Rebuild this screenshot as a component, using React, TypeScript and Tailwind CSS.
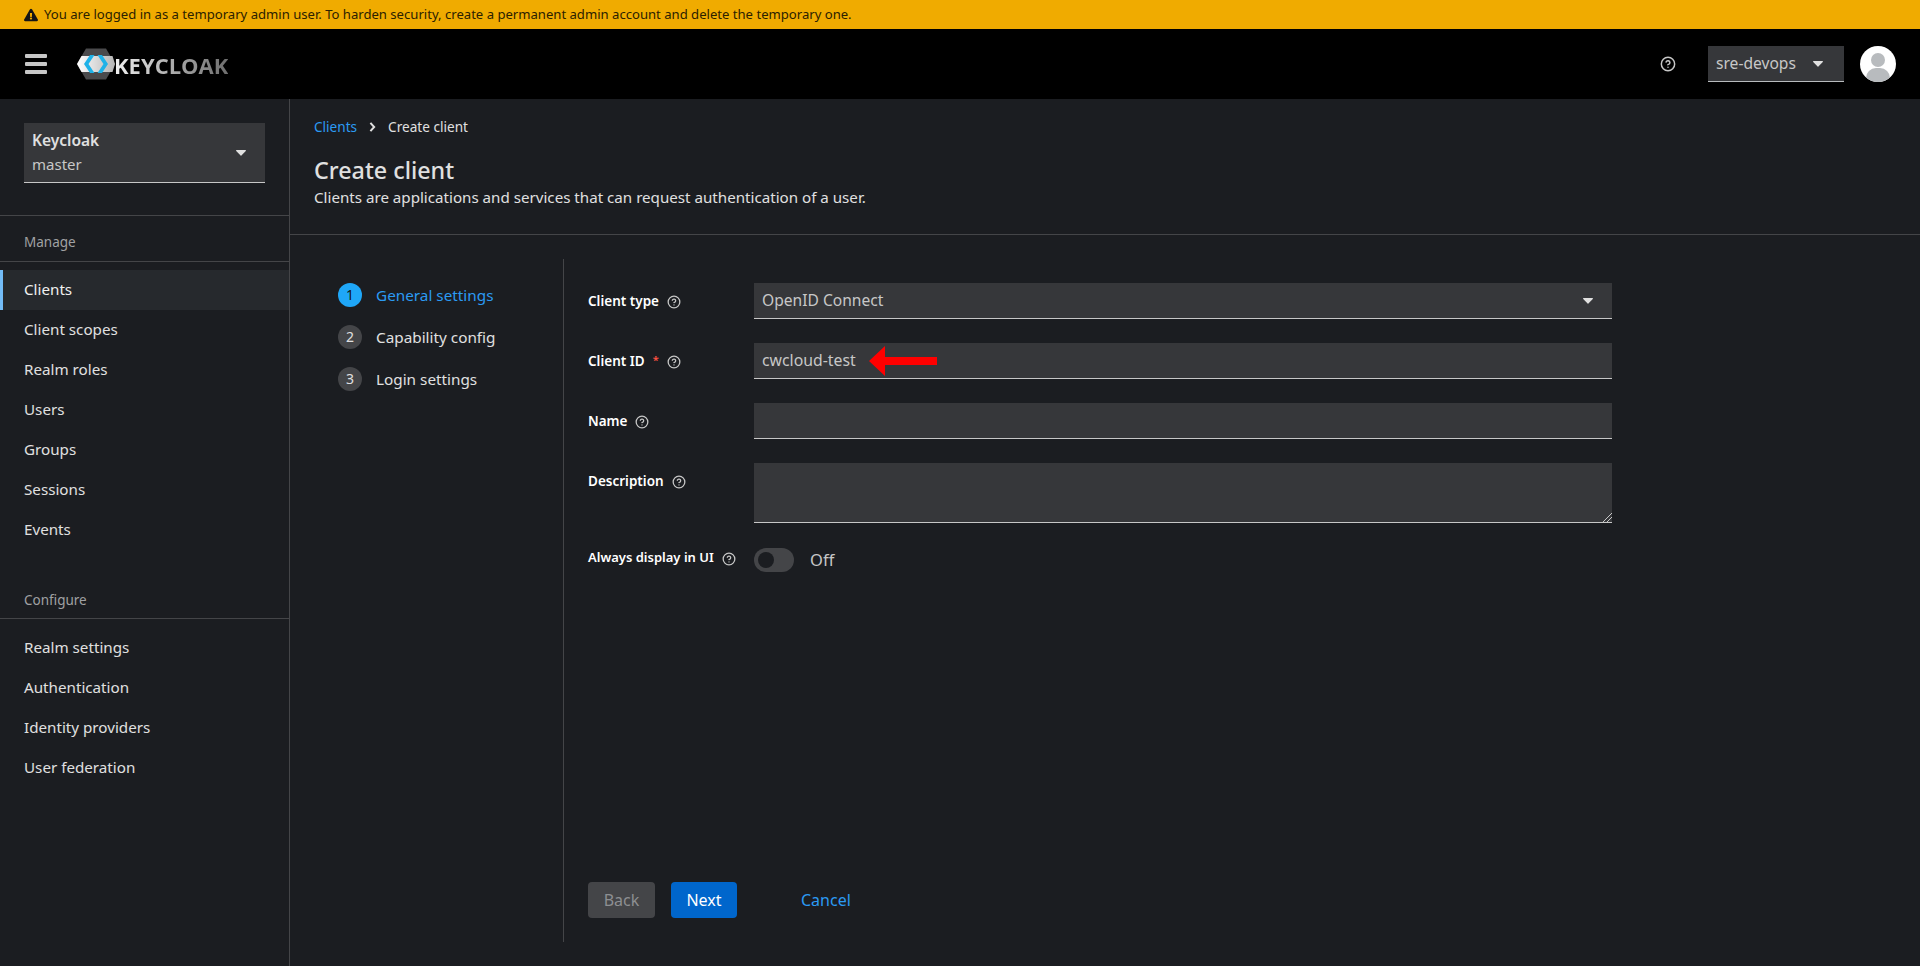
import React from "react";
import { FaExclamationTriangle } from "react-icons/fa";
import { CircleHelp } from "lucide-react";

const Caret = ({ className = "" }: { className?: string }) => (
  <svg viewBox="0 0 10 6" className={className} fill="currentColor">
    <path d="M0.6 0h8.8c.5 0 .8.6.4 1L5.4 5.6a.6.6 0 0 1-.8 0L.2 1C-.2.6.1 0 .6 0z" />
  </svg>
);

const Help = () => <CircleHelp className="w-[14px] h-[14px] text-[#c7c7c7] shrink-0 translate-y-px" strokeWidth={2.2} />;

const manage = ["Clients", "Client scopes", "Realm roles", "Users", "Groups", "Sessions", "Events"];
const configure = ["Realm settings", "Authentication", "Identity providers", "User federation"];

function NavItem({ label, active }: { label: string; active?: boolean }) {
  return (
    <div
      className={
        active
          ? "h-10 flex items-center pb-[2px] pl-[21px] border-l-[3px] border-[#73bcf7] bg-[#26292d] text-[#f0f0f0] text-[15.2px]"
          : "h-10 flex items-center pb-[2px] pl-6 text-[#e0e0e0] text-[15.2px]"
      }
    >
      {label}
    </div>
  );
}

function Logo() {
  return (
    <div className="flex items-center ml-[30px]">
      <svg viewBox="0 0 38 32" className="w-[38px] h-[32px]">
        <defs>
          <linearGradient id="band" x1="0" x2="1" y1="0" y2="0">
            <stop offset="0" stopColor="#ffffff" />
            <stop offset="1" stopColor="#b5b5b5" />
          </linearGradient>
        </defs>
        <path d="M9 0.5h20l9 15.5-9 15.5H9L0 16z" fill="#4a4a4c" />
        <path d="M4.5 8h31l2.5 8-2.5 8h-31L0 16z" fill="url(#band)" />
        <path d="M13 7l-6 9 6 9h4.5l-6-9 6-9z" fill="#1fb2e8" />
        <path d="M20.5 7l6 9-6 9H25l6-9-6-9z" fill="#1fb2e8" />
      </svg>
      <span className="-ml-px text-[22px] leading-none font-bold tracking-[0px] translate-y-px bg-gradient-to-r from-[#f2f2f2] to-[#6e6e6e] bg-clip-text text-transparent font-['Open_Sans',sans-serif]">
        KEYCLOAK
      </span>
    </div>
  );
}

function Field({
  label,
  required,
  children,
  height = "h-9",
}: {
  label: string;
  required?: boolean;
  children?: React.ReactNode;
  height?: string;
}) {
  return (
    <div className="flex">
      <div className="w-[166px] shrink-0 flex items-center gap-2 h-[36px] text-[13.5px] font-semibold text-white">
        <span>{label}</span>
        {required && <span className="text-[#fe5142] text-[11px] -translate-y-px">*</span>}
        <Help />
      </div>
      <div
        className={`${height} w-[858px] bg-[#36373a] border-b border-[#c7c7c7] flex items-center px-2 text-[#c7c7c7] text-[15.6px] relative`}
      >
        {children}
      </div>
    </div>
  );
}

export default function App() {
  return (
    <div className="h-screen w-full flex flex-col overflow-hidden bg-[#1b1d21] text-[#e0e0e0] text-base font-['Noto_Sans',sans-serif]">
      <div className="h-[29px] shrink-0 bg-[#f0ab00] flex items-center pl-6 gap-[6px] text-[13.1px] text-[#2b2100]">
        <FaExclamationTriangle className="w-[14px] h-[14px] text-[#151515]" />
        <span>You are logged in as a temporary admin user. To harden security, create a permanent admin account and delete the temporary one.</span>
      </div>

      <header className="h-[70px] shrink-0 bg-black flex items-center pl-[25px] pr-6">
        <svg viewBox="0 0 22 20" className="w-[22px] h-[20px] text-[#c7c7c7]" fill="currentColor">
          <rect width="22" height="4" rx="1" y="0" />
          <rect width="22" height="4" rx="1" y="8" />
          <rect width="22" height="4" rx="1" y="16" />
        </svg>
        <Logo />
        <div className="ml-auto flex items-center">
          <CircleHelp className="w-4 h-4 text-[#c7c7c7]" strokeWidth={2.2} />
          <div className="ml-8 w-[136px] h-9 bg-[#36373a] border-b border-[#b8bbbe] flex items-center pl-2 pr-[21px] justify-between text-[#c7c7c7] text-[15.6px]">
            <span>sre-devops</span>
            <Caret className="w-[10px] h-[6px] text-[#e0e0e0]" />
          </div>
          <div className="ml-4 w-9 h-9 rounded-full bg-white relative overflow-hidden">
            <div className="absolute left-[11px] top-[7px] w-[14px] h-[14px] rounded-full bg-[#b8bbbe]" />
            <div className="absolute left-[6px] top-[22px] w-[24px] h-[20px] rounded-t-[10px] bg-[#b8bbbe]" />
          </div>
        </div>
      </header>

      <div className="flex-1 flex min-h-0">
        <aside className="w-[290px] shrink-0 border-r border-[#444548] flex flex-col">
          <div className="px-6 pt-6 pb-8 border-b border-[#444548]">
            <div className="h-[60px] w-[241px] bg-[#36373a] border-b border-[#c7c7c7] flex items-center justify-between pl-2 pr-[19px]">
              <div className="-translate-y-px">
                <div className="font-semibold text-[#e0e0e0] leading-6 text-[15.5px]">Keycloak</div>
                <div className="text-[#c7c7c7] leading-6 text-[15px]">master</div>
              </div>
              <Caret className="w-[10px] h-[6px] text-[#e0e0e0]" />
            </div>
          </div>
          <div>
            <div className="h-[46px] pl-6 pt-[7px] flex items-center text-[13.5px] text-[#a0a1a3] border-b border-[#444548]">Manage</div>
            <div className="pt-2">
              {manage.map((m) => (
                <NavItem key={m} label={m} active={m === "Clients"} />
              ))}
            </div>
          </div>
          <div className="pt-[35px]">
            <div className="h-[34px] pl-6 flex items-center pb-[3px] text-[13.5px] text-[#a0a1a3] border-b border-[#444548]">Configure</div>
            <div className="pt-[9px]">
              {configure.map((m) => (
                <NavItem key={m} label={m} />
              ))}
            </div>
          </div>
        </aside>

        <main className="flex-1 flex flex-col min-w-0">
          <div className="h-[136px] shrink-0 border-b border-[#444548] pl-6 pt-[17px]">
            <div className="flex items-center text-[13.6px] leading-[22px]">
              <span className="text-[#2b9af3]">Clients</span>
              <svg viewBox="0 0 8 12" className="w-[7px] h-[10px] ml-[12px] mr-[12px] text-[#e0e0e0]" fill="none" stroke="currentColor" strokeWidth="2.4">
                <path d="M1.5 1l4.5 5-4.5 5" />
              </svg>
              <span className="text-[#e0e0e0]">Create client</span>
            </div>
            <h1 className="mt-4 text-[23.3px] leading-[32px] font-medium text-[#e0e0e0]">Create client</h1>
            <p className="text-[15.15px] leading-[22px] text-[#e0e0e0]">Clients are applications and services that can request authentication of a user.</p>
          </div>

          <div className="flex-1 flex pt-6 pb-6 min-h-0">
            <div className="w-[274px] shrink-0 border-r border-[#444548] pl-12 pt-6 flex flex-col gap-[18px]">
              {["General settings", "Capability config", "Login settings"].map((s, i) => (
                <div key={s} className="flex items-center gap-[14px] h-6">
                  <div
                    className={
                      i === 0
                        ? "w-6 h-6 rounded-full bg-[#1fa7f8] flex items-center justify-center text-sm text-[#151515]"
                        : "w-6 h-6 rounded-full bg-[#444548] flex items-center justify-center text-sm text-[#e0e0e0]"
                    }
                  >
                    {i + 1}
                  </div>
                  <span className={i === 0 ? "text-[#2b9af3] text-[15.3px]" : "text-[#e0e0e0] text-[15.3px]"}>{s}</span>
                </div>
              ))}
            </div>

            <div className="flex-1 pl-6 pt-6 flex flex-col">
              <div className="flex flex-col gap-6">
                <Field label="Client type">
                  <span className="flex-1">OpenID Connect</span>
                  <Caret className="w-[10px] h-[6px] text-[#e0e0e0] mr-[11px]" />
                </Field>
                <Field label="Client ID" required>
                  <span className="text-[15.8px]">cwcloud-test</span>
                  <svg viewBox="0 0 68 30" className="absolute left-[115px] top-[3px] w-[68px] h-[30px]" fill="#ff0000">
                    <path d="M0 15L16 0v11h52v8H16v11z" />
                  </svg>
                </Field>
                <Field label="Name" />
                <Field label="Description" height="h-[60px]">
                  <svg viewBox="0 0 10 10" className="absolute right-0 bottom-0 w-[10px] h-[10px] text-[#c7c7c7]" fill="none" stroke="currentColor" strokeWidth="1">
                    <path d="M1 10L10 1M5 10l5-5" />
                  </svg>
                </Field>
                <div className="flex items-center h-6 mt-[1px]">
                  <div className="w-[166px] shrink-0 flex items-center gap-2 pb-1 text-[13px] font-semibold text-white">
                    <span>Always display in UI</span>
                    <Help />
                  </div>
                  <div className="w-10 h-6 rounded-full bg-[#444548] relative">
                    <div className="absolute left-1 top-1 w-4 h-4 rounded-full bg-[#1b1d21]" />
                  </div>
                  <span className="ml-4 text-[#c7c7c7] text-[16.5px]">Off</span>
                </div>
              </div>
              <div className="mt-auto flex items-center mb-6">
                <div className="w-[67px] h-9 pb-px rounded bg-[#444548] text-[#8d8f92] flex items-center justify-center">Back</div>
                <div className="ml-4 w-[66px] h-9 pb-px rounded bg-[#0066cc] text-white flex items-center justify-center">Next</div>
                <div className="ml-16 pb-px text-[#2b9af3]">Cancel</div>
              </div>
            </div>
          </div>
        </main>
      </div>
    </div>
  );
}
